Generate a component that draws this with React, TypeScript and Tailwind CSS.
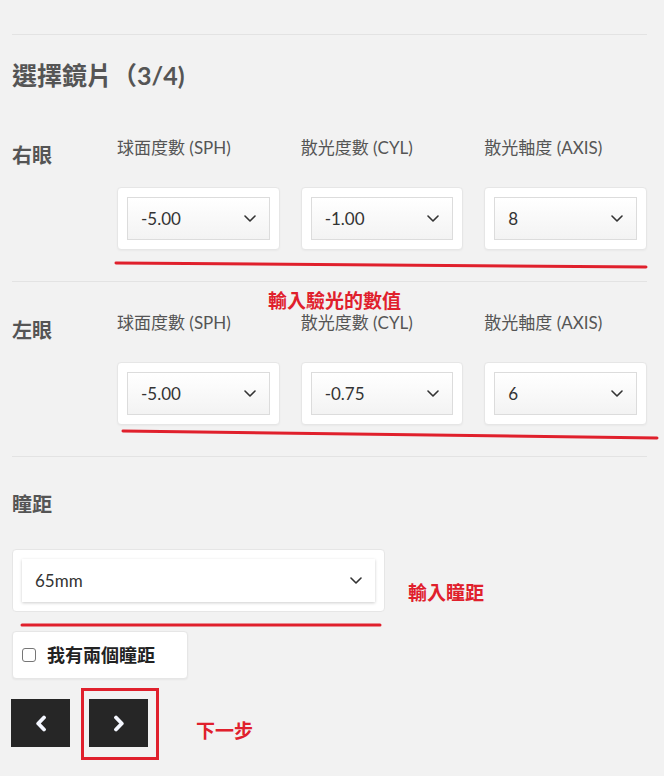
import React from "react";

const FONT = { fontFamily: "Lato, 'Noto Sans CJK TC', sans-serif" };

type Field = { label: string; value: string };

const rightEye: Field[] = [
  { label: "球面度數 (SPH)", value: "-5.00" },
  { label: "散光度數 (CYL)", value: "-1.00" },
  { label: "散光軸度 (AXIS)", value: "8" },
];

const leftEye: Field[] = [
  { label: "球面度數 (SPH)", value: "-5.00" },
  { label: "散光度數 (CYL)", value: "-0.75" },
  { label: "散光軸度 (AXIS)", value: "6" },
];

function Chevron() {
  return (
    <svg width="12" height="7" viewBox="0 0 12 7" fill="none">
      <path d="M1 1l5 5 5-5" stroke="#333" strokeWidth="1.6" strokeLinecap="round" strokeLinejoin="round" />
    </svg>
  );
}

function SelectCard({ value }: { value: string }) {
  return (
    <div className="bg-white border border-[#e6e6e6] rounded-[4px] p-[9px] shadow-[0_1px_2px_rgba(0,0,0,0.04)]">
      <div className="h-[43px] border border-[#dcdcdc] bg-gradient-to-b from-white to-[#f3f3f3] flex items-center justify-between pl-[13px] pr-[13px]">
        <span className="text-[17px] text-[#333]">{value}</span>
        <Chevron />
      </div>
    </div>
  );
}

function EyeRow({ title, fields }: { title: string; fields: Field[] }) {
  return (
    <div className="flex">
      <div className="w-[105px] shrink-0 mt-[5px] text-[20px] leading-[28px] font-bold text-[#555]">{title}</div>
      <div className="flex-1 grid grid-cols-3 gap-x-[21px]">
        {fields.map((f) => (
          <div key={f.label}>
            <div className="text-[17px] leading-[24px] text-[#555] mb-[27px]">{f.label}</div>
            <SelectCard value={f.value} />
          </div>
        ))}
      </div>
    </div>
  );
}

function NavButton({ dir }: { dir: "left" | "right" }) {
  return (
    <button className="w-[59px] h-[48px] bg-[#262626] flex items-center justify-center">
      <svg width="12" height="17" viewBox="0 0 12 17" fill="none">
        <path
          d={dir === "left" ? "M9 2.5L3.2 8.5 9 14.5" : "M3 2.5l5.8 6L3 14.5"}
          stroke="#f4f7ff"
          strokeWidth="3.8"
          strokeLinecap="round"
          strokeLinejoin="round"
        />
      </svg>
    </button>
  );
}

export default function App() {
  return (
    <div className="relative w-[664px] h-[776px] bg-[#f2f2f2] overflow-hidden" style={FONT}>
      <div className="pl-[12px] pr-[17px] pt-[34px]">
        <div className="border-t border-[#e3e3e3]" />

        {/* 標題 */}
        <h1 className="mt-[24px] text-[25px] leading-[32px] font-bold text-[#555]">選擇鏡片（3/4)</h1>

        {/* 右眼 */}
        <div className="mt-[45px]">
          <EyeRow title="右眼" fields={rightEye} />
        </div>
        <div className="mt-[31px] border-t border-[#e3e3e3]" />

        {/* 左眼 */}
        <div className="mt-[29px]">
          <EyeRow title="左眼" fields={leftEye} />
        </div>
        <div className="mt-[31px] border-t border-[#e3e3e3]" />

        {/* 瞳距 */}
        <div className="mt-[33px] text-[20px] leading-[28px] font-bold text-[#555]">瞳距</div>
        <div className="mt-[31px] w-[373px] bg-white border border-[#e6e6e6] rounded-[4px] p-[9px]">
          <div className="h-[43px] bg-white shadow-[0_1px_3px_rgba(0,0,0,0.2)] flex items-center justify-between pl-[13px] pr-[13px]">
            <span className="text-[17px] text-[#333]">65mm</span>
            <Chevron />
          </div>
        </div>

        <label className="mt-[19px] w-[176px] h-[48px] bg-white border border-[#e6e6e6] rounded-[4px] flex items-center pl-[9px] gap-[11px] shadow-[0_1px_2px_rgba(0,0,0,0.05)]">
          <span className="w-[14px] h-[14px] border border-[#767676] rounded-[3px] bg-white" />
          <span className="text-[18px] font-bold text-[#222]">我有兩個瞳距</span>
        </label>

        <div className="mt-[20px] flex gap-[19px] -ml-[1px]">
          <NavButton dir="left" />
          <NavButton dir="right" />
        </div>
      </div>

      {/* 註解 */}
      <svg className="absolute inset-0 pointer-events-none" width="664" height="776" viewBox="0 0 664 776" fill="none">
        <path d="M116 263 L646 267" stroke="#e0202c" strokeWidth="3" strokeLinecap="round" />
        <path d="M123 431 L657 438" stroke="#e0202c" strokeWidth="3" strokeLinecap="round" />
        <path d="M22 625 L380 625" stroke="#e0202c" strokeWidth="3" strokeLinecap="round" />
        <rect x="82.5" y="689.5" width="75" height="69" stroke="#e0202c" strokeWidth="3" />
      </svg>
      <div className="absolute left-[268px] top-[289px] text-[19px] leading-[24px] font-bold text-[#e0202c]">輸入驗光的數值</div>
      <div className="absolute left-[408px] top-[581px] text-[19px] leading-[24px] font-bold text-[#e0202c]">輸入瞳距</div>
      <div className="absolute left-[196px] top-[719px] text-[19px] leading-[24px] font-bold text-[#e0202c]">下一步</div>
    </div>
  );
}
